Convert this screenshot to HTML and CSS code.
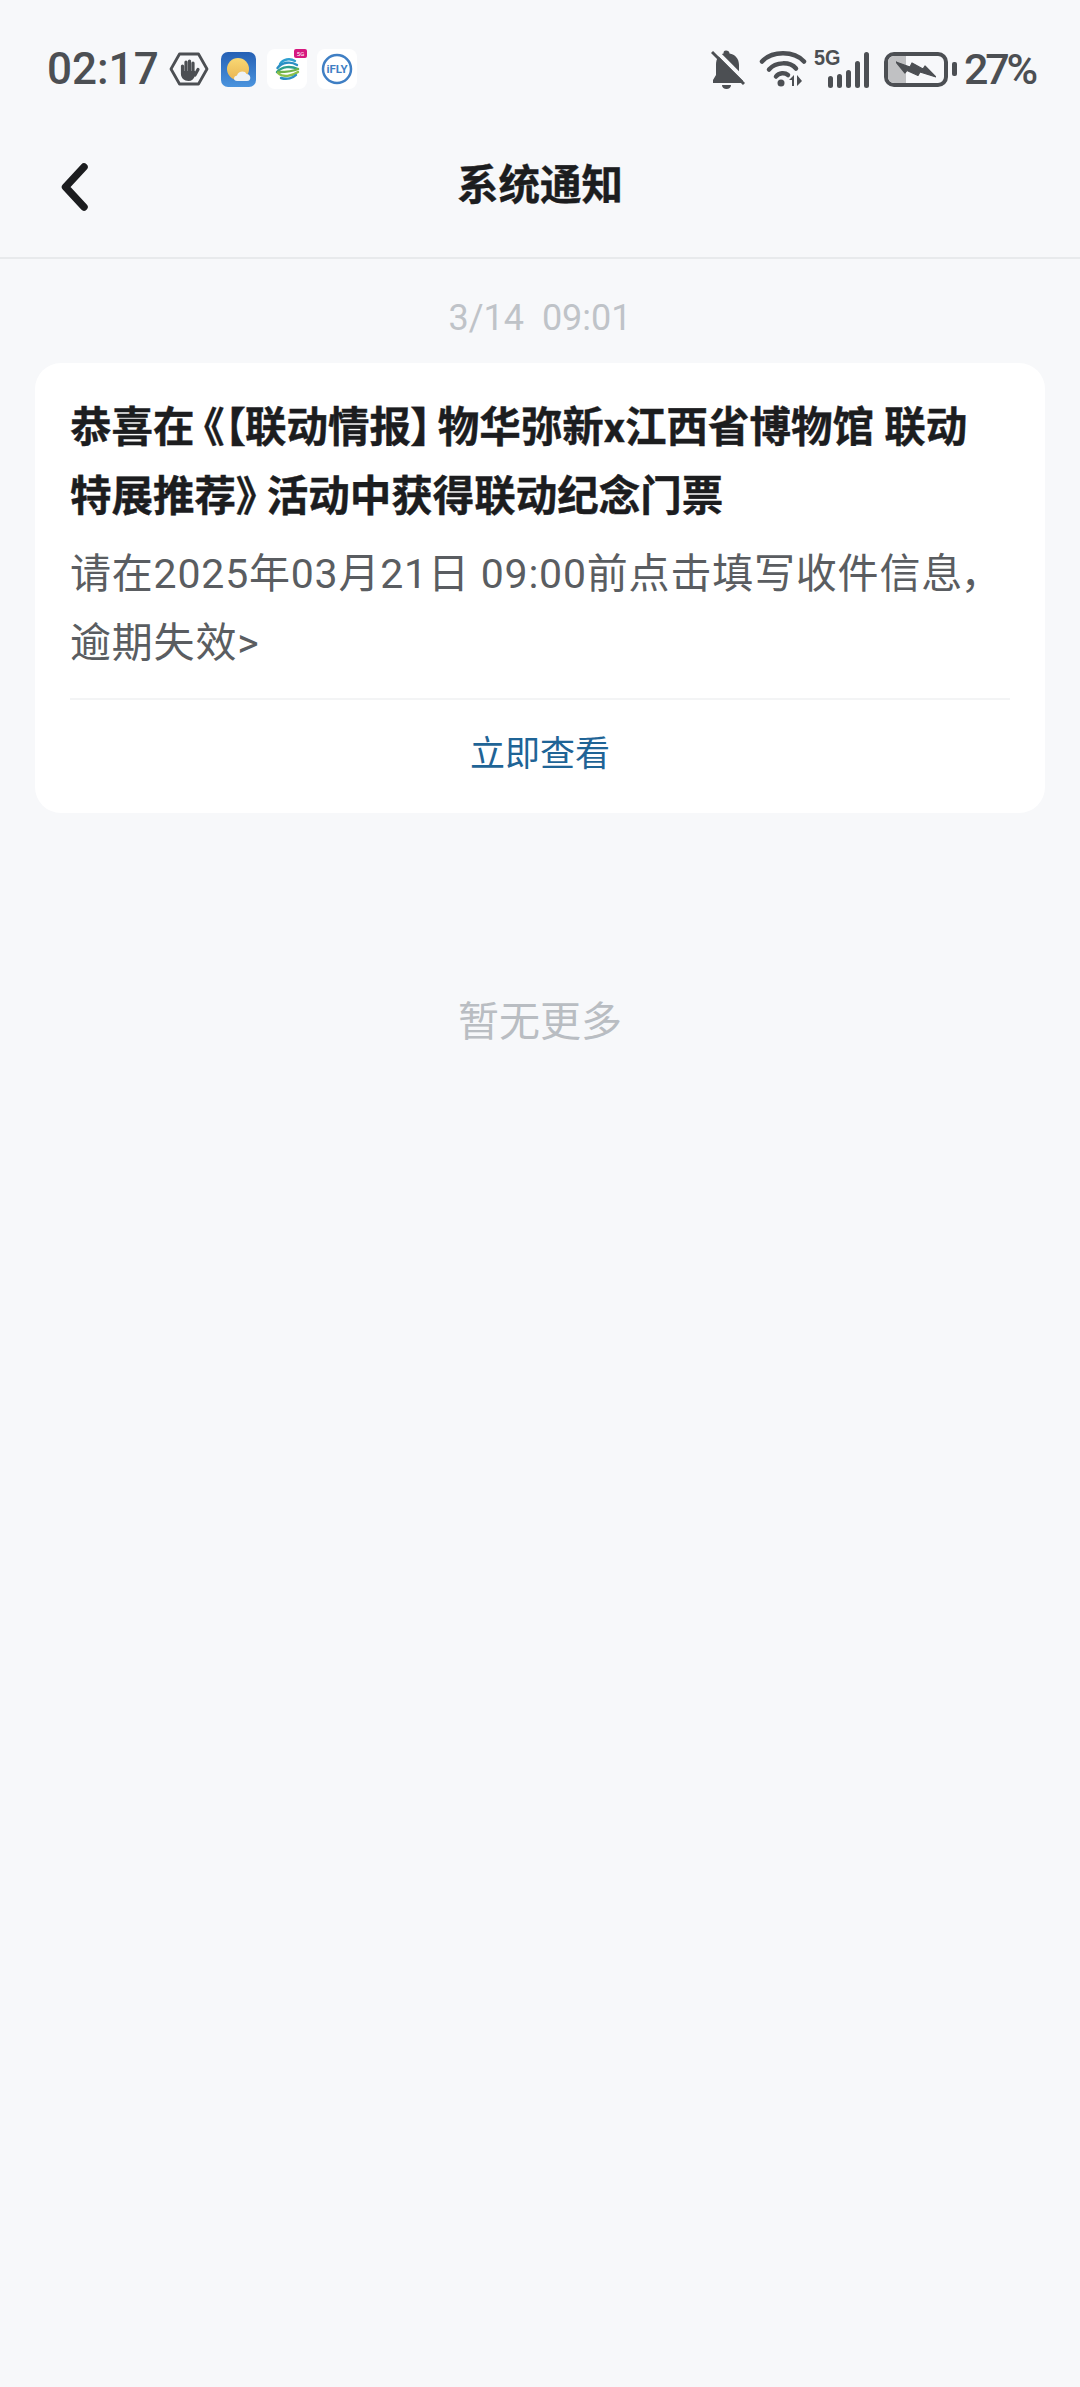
FILE: index.html
```html
<!DOCTYPE html>
<html lang="zh-CN">
<head>
<meta charset="UTF-8" />
<meta name="viewport" content="width=device-width, initial-scale=1" />
<title>系统通知</title>
<link rel="stylesheet" href="styles.css">
</head>
<body>

<div class="status-bar">
  <div class="status-left">
    <span class="clock">02:17</span>
    <svg width="40" height="34" viewBox="0 0 40 34">
      <path d="M10.500 2H29.500L38 17L29.500 32H10.500L2 17Z" fill="none" stroke="#4c4f53" stroke-width="2.800" stroke-linejoin="round"/>
      <path d="M13.500 14V22M17 10V20M20.500 9V20M24 11V21M26 23L29 17.500" fill="none" stroke="#4c4f53" stroke-width="3.200" stroke-linecap="round"/>
      <path d="M12 19H26V23C25 27 23 29 19.500 29C15 29 12 26 12 22Z" fill="#4c4f53"/>
    </svg>
    <svg class="ico-app" width="35" height="35" viewBox="0 0 35 35">
      <defs>
        <linearGradient id="sky" x1="0" y1="0" x2="0" y2="1">
          <stop offset="0" stop-color="#2560b4"/>
          <stop offset="1" stop-color="#4b94de"/>
        </linearGradient>
        <linearGradient id="sun" x1="0" y1="0" x2="0" y2="1">
          <stop offset="0" stop-color="#f9d873"/>
          <stop offset="1" stop-color="#e9b552"/>
        </linearGradient>
      </defs>
      <rect width="35" height="35" rx="7" fill="url(#sky)"/>
      <circle cx="17" cy="17" r="11" fill="url(#sun)"/>
      <path d="M16 29C12 29 12 24 16 23.500C17 19 24 18 25.500 22C30 22 31 29 26 29Z" fill="#eef2f5"/>
    </svg>
    <div class="app-tile">
      <svg width="40" height="40" viewBox="0 0 40 40">
        <g fill="none" stroke-width="2.400" stroke-linecap="round">
          <path d="M13 15C16 10 23 9 28 12" stroke="#2f9fd0"/>
          <path d="M10.500 19C15 13 24 12 30 16" stroke="#2b8fc4"/>
          <path d="M10 23C15 17 24 17 31 20" stroke="#2f9f8c"/>
          <path d="M11 23C17 23 25 23 31 20" stroke="#6fb34a"/>
          <path d="M11 24C16 29 25 27 31 23" stroke="#8cc04a"/>
          <path d="M14 29C20 31 26 29 29 26" stroke="#2b8fc4"/>
        </g>
        <rect x="27" y="0" width="13" height="9" rx="2" fill="#d6187f"/>
        <text x="33.500" y="7" class="badge-text">5G</text>
      </svg>
    </div>
    <div class="app-tile">
      <svg width="40" height="40" viewBox="0 0 40 40">
        <circle cx="20" cy="20" r="14" fill="none" stroke="#3f7fc4" stroke-width="2.500"/>
        <text x="20" y="24" class="ifly-text">iFLY</text>
      </svg>
    </div>
  </div>
  <div class="status-right">
    <svg width="34" height="39" viewBox="0 0 34 39">
      <path d="M15 0.500C17 0.500 18.500 1.500 18.500 3.500C24 4.500 28 8.500 28 15V24L32 30V33H2V30L5 25V15C5 8.500 8 4.500 12.500 3.500C12.500 1.500 13 0.500 15 0.500Z" fill="#4c4f53"/>
      <path d="M11 35H20C20 37.500 18 39 15.500 39C13 39 11 37.500 11 35Z" fill="#4c4f53"/>
      <path d="M0 -4L40 36" stroke="#f7f8fa" stroke-width="4"/>
      <path d="M1 2L33 34" stroke="#4c4f53" stroke-width="3"/>
    </svg>
    <svg class="ico-wifi" width="48" height="36" viewBox="0 0 48 36">
      <path d="M3 10.500C13 -0.500 35 -0.500 45 10.500" fill="none" stroke="#4c4f53" stroke-width="4.500" stroke-linecap="round"/>
      <path d="M10 18.500C17 10.500 31 10.500 37 17.500" fill="none" stroke="#4c4f53" stroke-width="4.500" stroke-linecap="round"/>
      <path d="M17 25.500C20 21.500 26 21.500 29 24" fill="none" stroke="#4c4f53" stroke-width="4.500" stroke-linecap="round"/>
      <circle cx="22" cy="32" r="3.500" fill="#4c4f53"/>
      <path d="M33 35V29H30L35 24V35ZM38 24V35L43 30Z" fill="#4c4f53"/>
    </svg>
    <div class="signal">
      <span class="net">5G</span>
      <div class="bars">
        <i class="bar-1"></i><i class="bar-2"></i><i class="bar-3"></i><i class="bar-4"></i><i class="bar-5"></i>
      </div>
    </div>
    <div class="battery">
      <div class="battery-body">
        <div class="battery-level"></div>
        <svg class="bolt" width="40" height="17" viewBox="0 -1 40 17">
          <path d="M0 0L14 5L16 1L27 7L29 4L40 15L24 10L22 13.500L11 8.500L9 11Z" fill="#4c4f53" stroke="#4c4f53" stroke-width="1.200" stroke-linejoin="round"/>
        </svg>
      </div>
      <div class="battery-cap"></div>
    </div>
    <span class="percent">27%</span>
  </div>
</div>

<div class="nav-bar">
  <svg class="back" width="30" height="54" viewBox="0 0 30 54">
    <path d="M26 7L7.500 27L26 47" fill="none" stroke="#1c1d1f" stroke-width="7.500" stroke-linecap="round" stroke-linejoin="round"/>
  </svg>
  <h1>系统通知</h1>
</div>

<div class="date">3/14&nbsp;&nbsp;09:01</div>

<div class="card">
  <div class="card-title">恭喜在<span class="mark-open">《</span>【联动情报<span class="mark-close">】</span>物华弥新x江西省博物馆 联动<br>特展推荐<span class="mark-close-wide">》</span>活动中获得联动纪念门票</div>
  <div class="card-text">请在2025年03月21日 09:00前点击填写收件信息，逾期失效&gt;</div>
  <div class="card-link">立即查看</div>
</div>

<div class="no-more">暂无更多</div>

</body>
</html>
```

FILE: styles.css
```css
* { box-sizing: border-box; }
body {
  margin: 0;
  height: 2387px;
  overflow: hidden;
  background: #f7f8fa;
  font-family: Roboto, "Noto Sans CJK SC", sans-serif;
}
.status-bar {
  height: 129px;
  padding: 49px 46px 0 47px;
  display: flex;
  justify-content: space-between;
  align-items: flex-start;
}
.status-left, .status-right { display: flex; align-items: center; height: 40px; }
.status-bar svg { display: block; }
.clock {
  font-size: 44px;
  font-weight: 500;
  color: #4c4f53;
  margin-right: 10px;
}
.ico-app { margin-left: 12px; }
.app-tile {
  width: 40px;
  height: 40px;
  margin-left: 10px;
  background: #fff;
  border-radius: 8px;
}
.ico-app + .app-tile { margin-left: 11px; }
.badge-text { font-size: 6px; fill: #fff; text-anchor: middle; }
.ifly-text {
  font-size: 11.5px;
  font-weight: 700;
  fill: #3f7fc4;
  text-anchor: middle;
}
.ico-wifi { margin-left: 14px; }
.signal { position: relative; width: 55px; height: 40px; margin-left: 7px; }
.net {
  position: absolute;
  left: 0;
  top: -3px;
  font-size: 22px;
  line-height: 24px;
  font-weight: 700;
  color: #4c4f53;
  font-family: "Liberation Sans", sans-serif;
  transform: scaleX(0.9);
  transform-origin: left top;
}
.bars {
  position: absolute;
  right: 0;
  bottom: 1px;
  display: flex;
  align-items: flex-end;
  gap: 3.500px;
}
.bars i { display: block; width: 5.500px; background: #4c4f53; border-radius: 2.500px; }
.bar-1 { height: 12px; }
.bar-2 { height: 14px; }
.bar-3 { height: 18px; }
.bar-4 { height: 27px; }
.bar-5 { height: 36px; }
.battery { display: flex; align-items: center; margin-left: 15px; }
.battery-body {
  position: relative;
  width: 64px;
  height: 35px;
  border: 4px solid #4c4f53;
  border-radius: 10px;
  overflow: hidden;
}
.battery-level { width: 18px; height: 100%; background: #c0c1c3; }
.bolt { position: absolute; left: 8px; top: 5px; }
.battery-cap {
  width: 5px;
  height: 14px;
  margin-left: 4px;
  background: #4c4f53;
  border-radius: 2px;
}
.percent {
  width: 70px;
  margin-left: 7px;
  font-size: 43px;
  font-weight: 500;
  color: #4c4f53;
  letter-spacing: -3.200px;
  white-space: nowrap;
}
.nav-bar {
  position: relative;
  height: 130px;
  padding-bottom: 22px;
  display: flex;
  align-items: center;
  justify-content: center;
  border-bottom: 2px solid #e8eaec;
}
.back { position: absolute; left: 58px; top: 31px; }
.nav-bar h1 {
  margin: 0;
  font-size: 41.500px;
  font-weight: 700;
  color: #1c1d1f;
  -webkit-text-stroke: 0.4px #1c1d1f;
}
.date {
  margin-top: 37px;
  height: 44px;
  line-height: 44px;
  text-align: center;
  font-size: 36px;
  color: #bfc3c8;
}
.card {
  margin: 23px 35px 0;
  padding: 30px 35px 0;
  height: 450px;
  background: #fff;
  border-radius: 26px;
}
.card-title {
  font-size: 41.500px;
  line-height: 69px;
  font-weight: 700;
  color: #1c1d1f;
  -webkit-text-stroke: 0.4px #1c1d1f;
  font-feature-settings: "palt";
  white-space: nowrap;
}
.mark-open { margin-left: 9px; }
.mark-close { margin-right: 6px; }
.mark-close-wide { margin-right: 10px; }
.card-text {
  margin-top: 9px;
  font-size: 41px;
  letter-spacing: 0.800px;
  line-height: 69px;
  color: #5a5d61;
  font-feature-settings: "palt";
  padding-bottom: 20px;
  border-bottom: 2px solid #f3f4f5;
}
.card-link {
  height: 110px;
  line-height: 110px;
  text-align: center;
  font-size: 35px;
  color: #1f6496;
}
.no-more {
  margin-top: 181px;
  text-align: center;
  font-size: 41px;
  line-height: 56px;
  color: #b9bdc2;
}
```
